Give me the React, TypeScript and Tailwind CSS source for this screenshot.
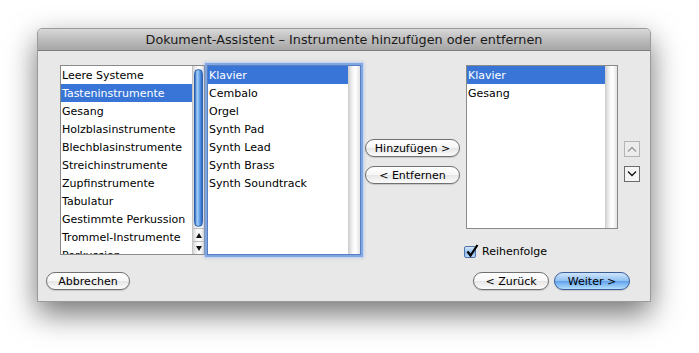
import React from "react";

const font = { fontFamily: '"DejaVu Sans", "Liberation Sans", sans-serif' };

const families = [
	"Leere Systeme",
	"Tasteninstrumente",
	"Gesang",
	"Holzblasinstrumente",
	"Blechblasinstrumente",
	"Streichinstrumente",
	"Zupfinstrumente",
	"Tabulatur",
	"Gestimmte Perkussion",
	"Trommel-Instrumente",
	"Perkussion",
];

const instruments = [
	"Klavier",
	"Cembalo",
	"Orgel",
	"Synth Pad",
	"Synth Lead",
	"Synth Brass",
	"Synth Soundtrack",
];

const chosen = ["Klavier", "Gesang"];

function Rows({ items, selected }: { items: string[]; selected: string }) {
	return (
		<div className="flex-1 overflow-hidden">
			{items.map((it) => (
				<div
					key={it}
					className={
						it === selected
							? "h-[18px] leading-[19px] pl-[1px] bg-[#3875d7] text-white whitespace-nowrap"
							: "h-[18px] leading-[19px] pl-[1px] text-black whitespace-nowrap"
					}
				>
					{it}
				</div>
			))}
		</div>
	);
}

function EmptyTrack() {
	return (
		<div className="w-[12px] h-full border-l border-[#cfcfcf] bg-[linear-gradient(90deg,#d6d6d6,#f6f6f6_35%,#ffffff_60%,#e2e2e2)]" />
	);
}

function ScrollBar() {
	return (
		<div className="w-[12px] h-full flex flex-col border-l border-[#c4c4c4] bg-[linear-gradient(90deg,#d6d6d6,#f6f6f6_35%,#ffffff_60%,#e2e2e2)]">
			<div className="flex-1 pt-[3px] pb-[1px] px-[1px] flex">
				<div className="w-full h-[158px] rounded-full border border-[#2f5fa8] bg-[linear-gradient(90deg,#2e6ac6,#a8d0f7_30%,#7ab2ef_55%,#3f80d8_85%,#2d65bf)]" />
			</div>
			<div className="h-[13px] border-t border-[#bdbdbd] flex items-center justify-center">
				<svg width="6" height="5" viewBox="0 0 6 5">
					<path d="M3 0 L6 5 L0 5 Z" fill="#111" />
				</svg>
			</div>
			<div className="h-[13px] border-t border-[#bdbdbd] flex items-center justify-center">
				<svg width="6" height="5" viewBox="0 0 6 5">
					<path d="M0 0 L6 0 L3 5 Z" fill="#111" />
				</svg>
			</div>
		</div>
	);
}

function Pill({ label, w, primary }: { label: string; w: string; primary?: boolean }) {
	const base = "h-[18px] rounded-full border flex items-center justify-center text-[11px] leading-none text-black shadow-[0_1px_1px_rgba(0,0,0,0.15)] " + w;
	return (
		<div
			className={
				primary
					? base + " border-[#3b5e9a] bg-[linear-gradient(#cfe5fb,#92c1f2_48%,#62a3ec_52%,#b3defd)]"
					: base + " border-[#707070] bg-[linear-gradient(#ffffff,#f6f6f6_48%,#e6e6e6_52%,#fbfbfb)]"
			}
		>
			{label}
		</div>
	);
}

function ArrowBtn({ up, enabled }: { up?: boolean; enabled?: boolean }) {
	return (
		<div
			className={
				enabled
					? "w-[16px] h-[16px] border border-[#6b6b6b] bg-[#f5f5f5] flex items-center justify-center"
					: "w-[16px] h-[16px] border border-[#b5b5b5] bg-[#ececec] flex items-center justify-center"
			}
		>
			<svg width="10" height="6" viewBox="0 0 10 6">
				<path
					d={up ? "M1 5.5 L5 1.5 L9 5.5" : "M1 0.5 L5 4.5 L9 0.5"}
					fill="none"
					stroke={enabled ? "#111" : "#9a9a9a"}
					strokeWidth="1.3"
				/>
			</svg>
		</div>
	);
}

export default function App() {
	return (
		<div className="min-h-screen bg-white pt-[28px] pl-[37px]" style={font}>
			<div className="w-[614px] h-[274px] flex flex-col bg-[#e8e8e8] rounded-t-[5px] border border-[#9a9a9a] shadow-[0_12px_30px_rgba(0,0,0,0.55)] overflow-hidden">
				<div className="h-[22px] shrink-0 flex items-center justify-center border-b border-[#7d7d7d] bg-[linear-gradient(#d8d8d8,#bdbdbd_50%,#a6a6a6)] text-[12.8px] text-[#1a1a1a]">
					Dokument-Assistent – Instrumente hinzufügen oder entfernen
				</div>

				<div className="flex-1 flex flex-col pt-[14px] text-[11px]">
					<div className="h-[207px] flex items-start pl-[22px]">
						{/* Instrumentenfamilien */}
						<div className="w-[145px] h-[190px] flex border border-[#8a8a8a] bg-white">
							<Rows items={families} selected="Tasteninstrumente" />
							<ScrollBar />
						</div>

						{/* Instrumente */}
						<div className="ml-[2px] w-[154px] h-[190px] flex border border-[#5a7fc0] bg-white shadow-[0_0_0_2px_rgba(104,152,226,0.75),0_0_3px_3px_rgba(130,170,230,0.45)]">
							<Rows items={instruments} selected="Klavier" />
							<EmptyTrack />
						</div>

						<div className="ml-[4px] pt-[74px] flex flex-col gap-[9px]">
							<Pill label="Hinzufügen >" w="w-[95px]" />
							<Pill label="< Entfernen" w="w-[95px]" />
						</div>

						{/* Partitur */}
						<div className="ml-[6px] flex flex-col">
							<div className="w-[152px] h-[164px] flex border border-[#8a8a8a] bg-white">
								<Rows items={chosen} selected="Klavier" />
								<EmptyTrack />
							</div>
							<div className="mt-[15px] -ml-[2px] flex items-center gap-[6px]">
								<div className="relative w-[12px] h-[12px] rounded-[2px] border border-[#4f72aa] bg-[linear-gradient(#d6e7fa,#8fbcee_55%,#b5d7fb)]">
									<svg className="absolute -top-[3px] left-[1px]" width="13" height="14" viewBox="0 0 13 14">
										<path d="M1.5 7.5 L4.5 11.5 L11.5 1" fill="none" stroke="#000" strokeWidth="2.2" />
									</svg>
								</div>
								<span className="text-black">Reihenfolge</span>
							</div>
						</div>

						<div className="ml-[6px] pt-[76px] flex flex-col gap-[9px]">
							<ArrowBtn up />
							<ArrowBtn enabled />
						</div>
					</div>

					<div className="flex items-center pl-[8px] pr-[20px]">
						<Pill label="Abbrechen" w="w-[84px]" />
						<div className="flex-1" />
						<Pill label="< Zurück" w="w-[76px]" />
						<div className="w-[5px]" />
						<Pill label="Weiter >" w="w-[76px]" primary />
					</div>
				</div>
			</div>
		</div>
	);
}
